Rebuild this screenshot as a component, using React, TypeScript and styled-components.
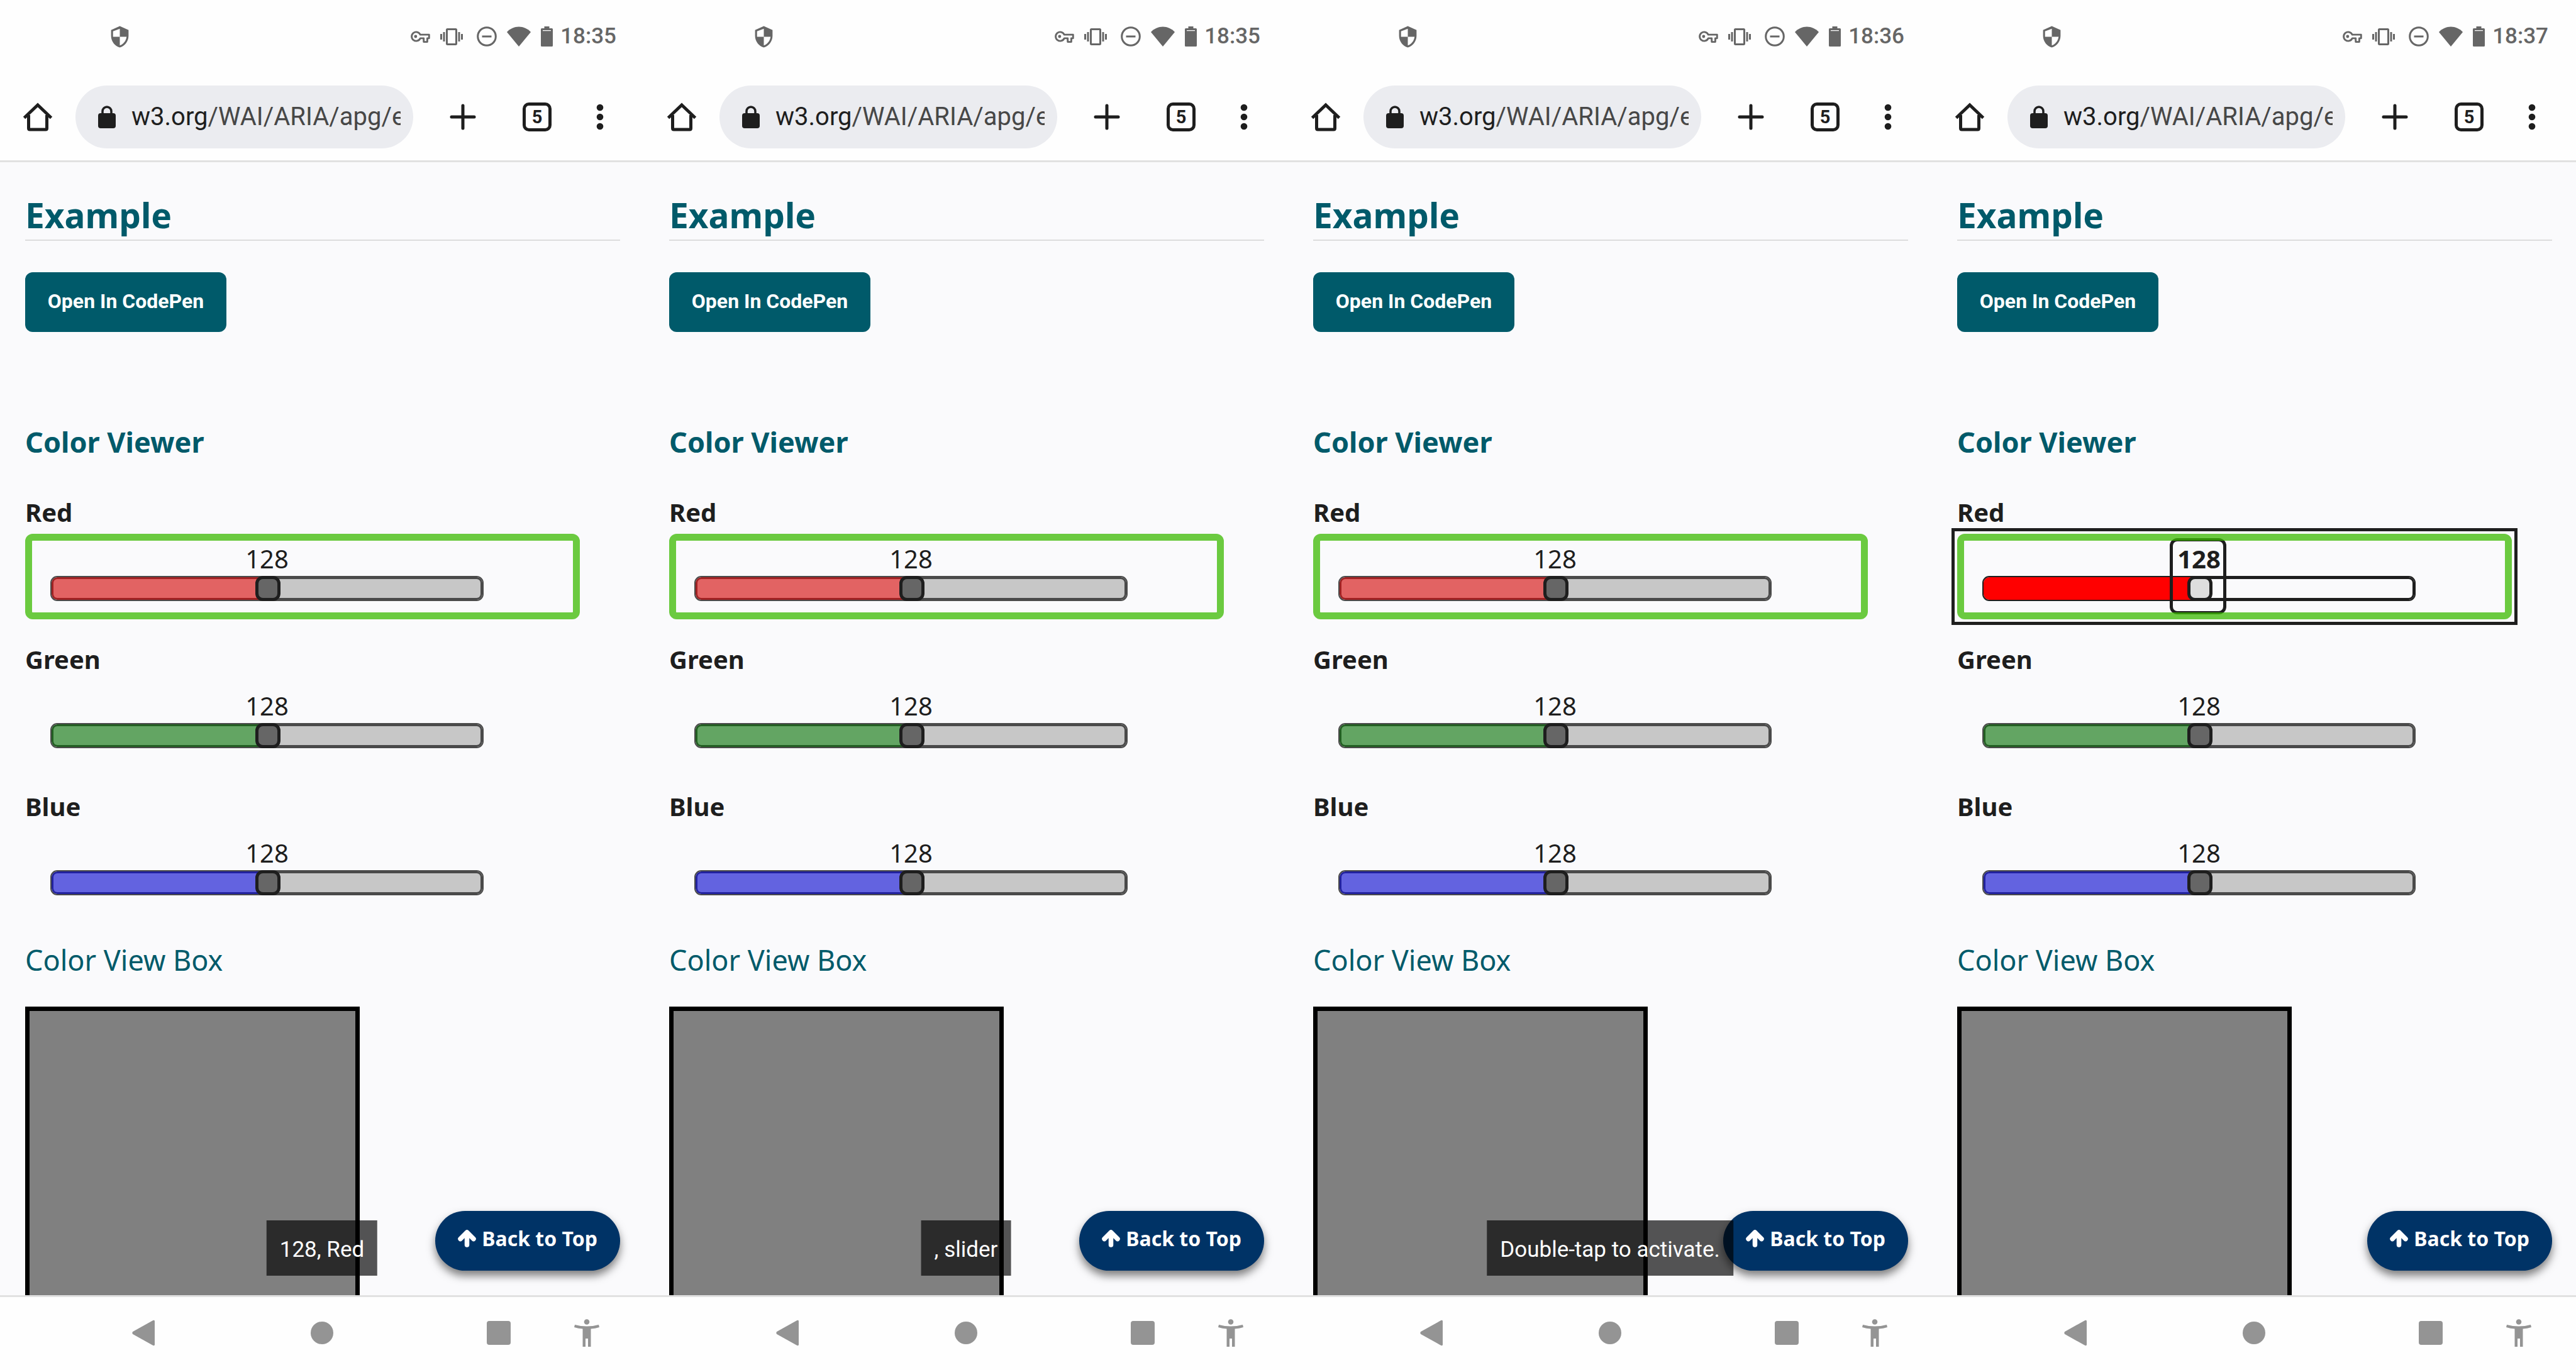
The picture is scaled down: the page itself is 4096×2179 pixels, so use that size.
import React, { useState } from "react";
import styled, { createGlobalStyle, css } from "styled-components";

const ui = `Roboto, "Liberation Sans", sans-serif`;
const body = `"Noto Sans", "Open Sans", sans-serif`;
const ink = "#1e1e1e";
const teal = "#005a6a";
const paper = "#fafafc";

const GlobalStyle = createGlobalStyle`
  *, *::before, *::after { box-sizing: border-box; }
  body { margin: 0; background: #fff; }
  button { border: 0; margin: 0; cursor: pointer; }
  svg { display: block; flex: none; }
`;

const Board = styled.main`
  display: grid;
  grid-template-columns: repeat(4, minmax(0, 1fr));
  height: 100vh;
  overflow: hidden;
`;

const Phone = styled.section`
  display: flex;
  flex-direction: column;
  min-height: 0;
  background: #fefefe;
  color: ${ink};
`;

const StatusBar = styled.div`
  display: flex;
  align-items: center;
  height: 116px;
  padding: 0 44px 0 172px;
  color: #666;
`;

const StatusIcons = styled.div`
  display: flex;
  align-items: center;
  gap: 16px;
  margin-left: auto;
`;

const Clock = styled.time`
  margin-left: 12px;
  font: 500 35px/44px ${ui};
`;

const Toolbar = styled.div`
  display: flex;
  align-items: center;
  height: 142px;
  padding: 0 45px 0 36px;
  border-bottom: 3px solid #e1e1e1;
`;

const ToolButton = styled.button`
  display: flex;
  padding: 0;
  background: none;
  color: ${ink};
`;

const Address = styled.button`
  display: flex;
  align-items: center;
  flex: 1;
  min-width: 0;
  height: 100px;
  margin: 0 58px 0 36px;
  padding: 0 20px 0 36px;
  border-radius: 50px;
  background: #ebecf0;
  color: ${ink};
  font: 400 40px/48px ${ui};
`;

const Url = styled.span`
  flex: 1;
  min-width: 0;
  margin-left: 25px;
  overflow: hidden;
  text-align: left;
  white-space: nowrap;
`;

const UrlPath = styled.span`
  color: #474747;
`;

const ToolGroup = styled.div`
  display: flex;
  align-items: center;
`;

const TabCount = styled(ToolButton)`
  align-items: center;
  justify-content: center;
  width: 46px;
  height: 46px;
  margin: 0 52px 0 74px;
  border: 5px solid ${ink};
  border-radius: 10px;
  font: 700 29px/32px ${ui};
`;

const Page = styled.div`
  position: relative;
  display: flex;
  flex: 1;
  flex-direction: column;
  align-items: flex-start;
  min-height: 0;
  padding: 48px 38px 0 40px;
  overflow: hidden;
  background: ${paper};
  font-family: ${body};
`;

const Title = styled.h2`
  align-self: stretch;
  margin: 0;
  padding-bottom: 3px;
  border-bottom: 2px solid #ddd;
  color: ${teal};
  font-size: 55px;
  font-weight: 700;
  line-height: 72px;
`;

const CodePenButton = styled.button`
  min-width: 320px;
  height: 95px;
  margin-top: 50px;
  padding: 0 34px 4px;
  border-radius: 12px;
  background: ${teal};
  color: #fff;
  font: 700 32px/40px ${ui};
`;

const Subtitle = styled.h3`
  margin: 145px 0 0;
  color: ${teal};
  font-size: 45px;
  font-weight: 700;
  line-height: 60px;
`;

const BoxTitle = styled.h4`
  margin: 44px 0 0;
  color: ${teal};
  font-size: 45px;
  font-weight: 400;
  line-height: 60px;
`;

const Sliders = styled.div`
  display: flex;
  flex-direction: column;
  align-self: stretch;
  gap: 36px;
  margin-top: 54px;
`;

const Label = styled.label`
  display: block;
  margin-bottom: 6px;
  font-size: 40px;
  font-weight: 700;
  line-height: 56px;
`;

const SliderBox = styled.div<{ $framed?: boolean; $focused?: boolean }>`
  position: relative;
  display: flex;
  flex-direction: column;
  margin-right: 64px;
  padding: 12px 153px 29px 40px;
  ${p => p.$focused && css`outline: 5px solid ${ink}; outline-offset: 4px;`}
  ${p => p.$framed && css`
    &::after {
      content: "";
      position: absolute;
      inset: 0;
      border: 11px solid rgba(59, 185, 1, 0.75);
      border-radius: 12px;
      pointer-events: none;
    }
  `}
`;

const Value = styled.output<{ $bold?: boolean }>`
  font-size: 40px;
  font-weight: ${p => (p.$bold ? 700 : 400)};
  line-height: 55px;
  text-align: center;
`;

interface Tone {
  fill: string;
  edge: string;
  rest: string;
  restEdge: string;
  thumb: string;
}

const Range = styled.input<{ $tone: Tone; $percent: number }>`
  appearance: none;
  display: block;
  width: 100%;
  height: 40px;
  margin: 0;
  background: none;
  outline: none;

  &::-webkit-slider-runnable-track {
    height: 40px;
    padding: 3px;
    border: 2px solid ${p => p.$tone.restEdge};
    border-radius: 11px;
    background:
      linear-gradient(to right, ${p => p.$tone.fill} ${p => p.$percent}%, ${p => p.$tone.rest} ${p => p.$percent}%) content-box,
      linear-gradient(to right, ${p => p.$tone.edge} ${p => p.$percent}%, ${p => p.$tone.restEdge} ${p => p.$percent}%) padding-box;
  }

  &::-webkit-slider-thumb {
    appearance: none;
    width: 40px;
    height: 40px;
    margin-top: -5px;
    border: 5px solid ${ink};
    border-radius: 12px;
    background: ${p => p.$tone.thumb};
  }
`;

const FocusRing = styled.div`
  position: absolute;
  top: 7px;
  left: 338px;
  width: 90px;
  height: 121px;
  border: 5px solid ${ink};
  border-radius: 12px;
  pointer-events: none;
`;

const ColorBox = styled.div`
  flex: 1;
  width: 532px;
  margin-top: 44px;
  border: 7px solid #000;
  border-bottom: 0;
  background: #808080;
`;

const BackToTop = styled.a`
  position: absolute;
  right: 38px;
  bottom: 39px;
  display: flex;
  align-items: center;
  gap: 9px;
  height: 95px;
  padding: 0 36px 8px;
  border-radius: 48px;
  background: #003366;
  box-shadow: 0 8px 14px rgba(0, 0, 0, 0.5);
  color: #fff;
  font-size: 32px;
  font-weight: 700;
  line-height: 44px;
  text-decoration: none;
  white-space: nowrap;
`;

const Toast = styled.div`
  position: absolute;
  bottom: 31px;
  left: 50%;
  padding: 25px 21px 19px;
  transform: translateX(-50%);
  background: rgba(0, 0, 0, 0.665);
  color: #fff;
  font: 400 35px/44px ${ui};
  white-space: nowrap;
`;

const NavBar = styled.nav`
  display: grid;
  grid-template-columns: 456fr 112fr 456fr;
  align-items: center;
  height: 119px;
  padding-bottom: 2px;
  border-top: 3px solid #e1e1e1;
`;

const NavSide = styled.div<{ $end?: boolean }>`
  display: flex;
  align-items: center;
  justify-content: ${p => (p.$end ? "flex-end" : "center")};
  gap: 101px;
  padding-right: ${p => (p.$end ? "71px" : "0")};
`;

const NavButton = styled(ToolButton)`
  justify-content: center;
  color: #949494;
`;

const ShieldIcon = () => (
  <svg width="37" height="37" viewBox="0 0 24 24" fill="currentColor">
    <path fillRule="evenodd" d="M12 1L3 5v6c0 5.55 3.84 10.74 9 12 5.16-1.26 9-6.45 9-12V5l-9-4zm0 2.7V12h7c-.53 4.12-3.28 7.79-7 8.94V12H5V6.3l7-2.6z" />
  </svg>
);

const KeyIcon = () => (
  <svg width="32" height="20" viewBox="1 5 22 14" fill="none" stroke="currentColor" strokeWidth="2">
    <path d="M12.2 10A5 5 0 1 0 12.2 14H16v4h4v-4h2v-4z" strokeLinejoin="round" />
    <circle cx="7" cy="12" r="1.7" fill="currentColor" stroke="none" />
  </svg>
);

const VibrateIcon = () => (
  <svg width="42" height="27" viewBox="0 3 28 18" fill="currentColor">
    <path d="M0 15h2V9H0v6zm3 2h2V7H3v10zm19-8v6h2V9h-2zm-3 8h2V7h-2v10zM16.5 3h-9C6.67 3 6 3.67 6 4.5v15c0 .83.67 1.5 1.5 1.5h9c.83 0 1.5-.67 1.5-1.5v-15c0-.83-.67-1.5-1.5-1.5zM16 19H8V5h8v14z" />
  </svg>
);

const DoNotDisturbIcon = () => (
  <svg width="32" height="32" viewBox="0 0 32 32" fill="none" stroke="currentColor" strokeWidth="3">
    <circle cx="16" cy="16" r="14.3" />
    <path d="M8.5 16h15" />
  </svg>
);

const WifiIcon = () => (
  <svg width="38" height="32" viewBox="0 0 38 32" fill="currentColor">
    <path d="M19 32L0 9C5 3.500 12 0.500 19 0.500S33 3.500 38 9z" />
  </svg>
);

const BatteryIcon = () => (
  <svg width="19" height="32" viewBox="0 0 19 32" fill="currentColor">
    <path fillRule="evenodd" d="M5.500 0h8v3H17.500q1.500 0 1.500 1.500V30.500q0 1.500-1.500 1.500H1.500Q0 32 0 30.500V4.500Q0 3 1.500 3h4zM3 6v1.300h13V6z" />
  </svg>
);

const HomeIcon = () => (
  <svg width="48" height="48" viewBox="0 0 48 48" fill="none" stroke="currentColor" strokeWidth="5">
    <path d="M2.500 25.500L24 5l21.500 20.500" strokeLinejoin="miter" />
    <path d="M9.500 21v21q0 2 2 2h25q2 0 2-2V21" />
  </svg>
);

const LockIcon = () => (
  <svg width="28" height="36" viewBox="0 0 28 36" fill="none">
    <rect y="12" width="28" height="24" rx="4" fill="currentColor" />
    <path d="M7 14V9a7 7 0 0 1 14 0v5" stroke="currentColor" strokeWidth="3.500" />
  </svg>
);

const PlusIcon = () => (
  <svg width="42" height="42" viewBox="0 0 42 42" stroke="currentColor" strokeWidth="5" strokeLinecap="round">
    <path d="M21 3v36M3 21h36" />
  </svg>
);

const MenuIcon = () => (
  <svg width="50" height="42" viewBox="0 0 50 42" fill="currentColor">
    <circle cx="25" cy="6" r="5.300" />
    <circle cx="25" cy="21" r="5.300" />
    <circle cx="25" cy="36" r="5.300" />
  </svg>
);

const ArrowUpIcon = () => (
  <svg width="29" height="28" viewBox="0 0 29 28" fill="none" stroke="currentColor" strokeWidth="7.500" strokeLinecap="round" strokeLinejoin="round">
    <path d="M4 14.500L14.500 4L25 14.500M14.500 6v18" />
  </svg>
);

const BackIcon = () => (
  <svg width="36" height="42" viewBox="0 0 36 42" fill="currentColor">
    <path d="M1.200 19L33 1.200q3-1.200 3 1.300v37q0 2.500-3 1.300L1.200 23q-1.800-2 0-4z" />
  </svg>
);

const CircleIcon = () => (
  <svg width="36" height="36" viewBox="0 0 36 36" fill="currentColor">
    <circle cx="18" cy="18" r="18" />
  </svg>
);

const SquareIcon = () => (
  <svg width="38" height="38" viewBox="0 0 38 38" fill="currentColor">
    <rect width="38" height="38" rx="4" />
  </svg>
);

const PersonIcon = () => (
  <svg width="40" height="44" viewBox="0 0 40 44" fill="currentColor">
    <circle cx="20" cy="4.500" r="4.300" />
    <path d="M1 9Q20 14 39 9L40 13Q33.500 15 26.500 15.500V44H22V31H18V44H13.500V15.500Q6.500 15 0 13z" />
  </svg>
);

type Channel = "Red" | "Green" | "Blue";

const tones: Record<Channel, Tone> = {
  Red: { fill: "#e26363", edge: "#a02223", rest: "#c7c7c7", restEdge: "#4a4a4a", thumb: "#666" },
  Green: { fill: "#63a563", edge: "#225f22", rest: "#c7c7c7", restEdge: "#4a4a4a", thumb: "#666" },
  Blue: { fill: "#6363e0", edge: "#22229f", rest: "#c7c7c7", restEdge: "#4a4a4a", thumb: "#666" },
};

const activeTone: Tone = { fill: "#f00", edge: "#f00", rest: paper, restEdge: ink, thumb: "#dedede" };

interface SliderProps {
  id: string;
  channel: Channel;
  framed?: boolean;
  focused?: boolean;
}

function ColorSlider({ id, channel, framed, focused }: SliderProps) {
  const [value, setValue] = useState(128);
  return (
    <div>
      <Label htmlFor={id}>{channel}</Label>
      <SliderBox $framed={framed} $focused={focused}>
        <Value htmlFor={id} $bold={focused}>{value}</Value>
        <Range
          id={id}
          type="range"
          min={0}
          max={255}
          value={value}
          onChange={e => setValue(Number(e.target.value))}
          $tone={focused ? activeTone : tones[channel]}
          $percent={Math.round((value / 255) * 100)}
        />
        {focused && <FocusRing />}
      </SliderBox>
    </div>
  );
}

interface ScreenProps {
  id: string;
  time: string;
  toast?: string;
  focused?: boolean;
}

function PhoneScreen({ id, time, toast, focused }: ScreenProps) {
  return (
    <Phone>
      <StatusBar>
        <ShieldIcon />
        <StatusIcons>
          <KeyIcon />
          <VibrateIcon />
          <DoNotDisturbIcon />
          <WifiIcon />
          <BatteryIcon />
        </StatusIcons>
        <Clock>{time}</Clock>
      </StatusBar>
      <Toolbar>
        <ToolButton aria-label="Home"><HomeIcon /></ToolButton>
        <Address>
          <LockIcon />
          <Url>w3.org<UrlPath>/WAI/ARIA/apg/e</UrlPath></Url>
        </Address>
        <ToolGroup>
          <ToolButton aria-label="New tab"><PlusIcon /></ToolButton>
          <TabCount>5</TabCount>
          <ToolButton aria-label="Menu"><MenuIcon /></ToolButton>
        </ToolGroup>
      </Toolbar>
      <Page>
        <Title>Example</Title>
        <CodePenButton>Open In CodePen</CodePenButton>
        <Subtitle>Color Viewer</Subtitle>
        <Sliders>
          <ColorSlider id={`${id}-red`} channel="Red" framed focused={focused} />
          <ColorSlider id={`${id}-green`} channel="Green" />
          <ColorSlider id={`${id}-blue`} channel="Blue" />
        </Sliders>
        <BoxTitle>Color View Box</BoxTitle>
        <ColorBox />
        <BackToTop href="#top"><ArrowUpIcon />Back to Top</BackToTop>
        {toast && <Toast>{toast}</Toast>}
      </Page>
      <NavBar>
        <NavSide><NavButton aria-label="Back"><BackIcon /></NavButton></NavSide>
        <NavButton aria-label="Home screen"><CircleIcon /></NavButton>
        <NavSide $end>
          <NavButton aria-label="Overview"><SquareIcon /></NavButton>
          <NavButton aria-label="Accessibility"><PersonIcon /></NavButton>
        </NavSide>
      </NavBar>
    </Phone>
  );
}

export default function App() {
  return (
    <>
      <GlobalStyle />
      <Board>
        <PhoneScreen id="first" time="18:35" toast="128, Red" />
        <PhoneScreen id="second" time="18:35" toast=", slider" />
        <PhoneScreen id="third" time="18:36" toast="Double-tap to activate." />
        <PhoneScreen id="fourth" time="18:37" focused />
      </Board>
    </>
  );
}
